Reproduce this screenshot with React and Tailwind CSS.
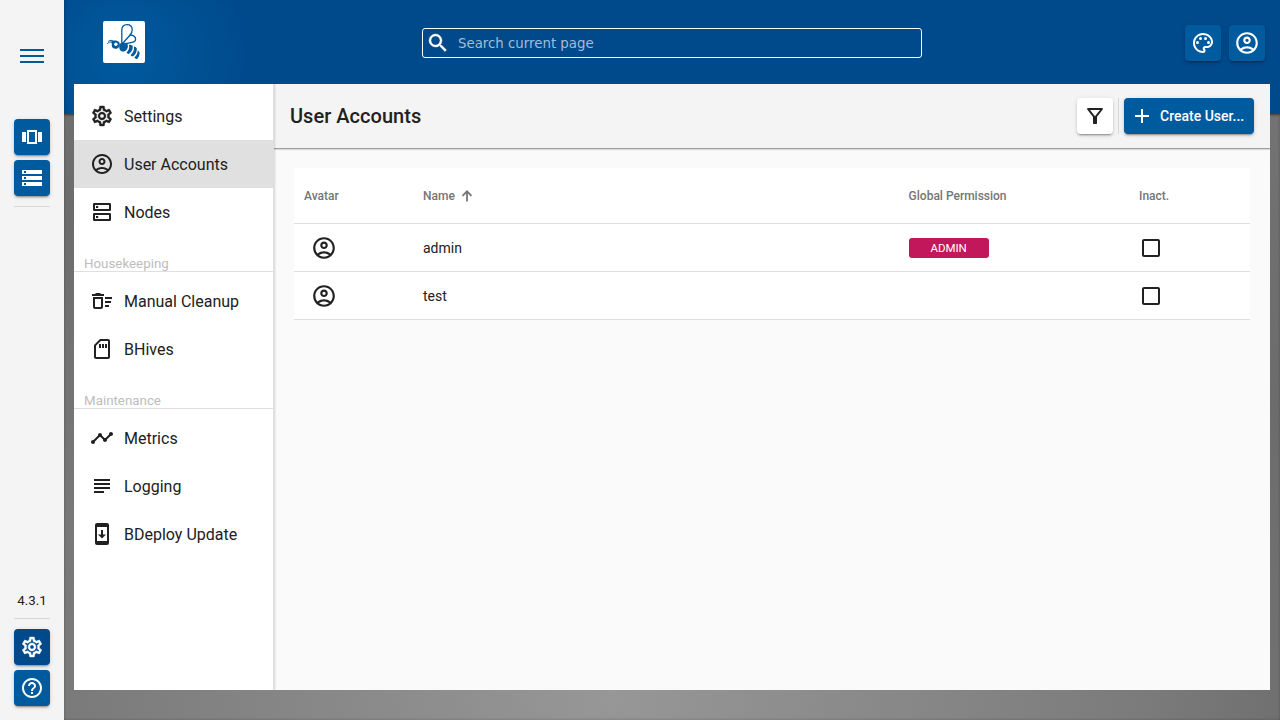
import React from "react";
import {
  MdOutlineSettings,
  MdOutlineAccountCircle,
  MdOutlineDeleteSweep,
  MdOutlineSdCard,
  MdTimeline,
  MdSubject,
  MdStorage,
  MdHelpOutline,
  MdOutlinePalette,
  MdSearch,
  MdOutlineFilterAlt,
  MdAdd,
} from "react-icons/md";

const raised =
  "shadow-[0_3px_1px_-2px_rgba(0,0,0,0.2),0_2px_2px_0_rgba(0,0,0,0.14),0_1px_5px_0_rgba(0,0,0,0.12)]";

const bolder = "[&>path:last-child]:[stroke-width:0.4]";

function NodesIcon() {
  return (
    <svg width="24" height="24" viewBox="0 0 24 24" fill="none" stroke="currentColor" strokeWidth="2">
      <rect x="4" y="4" width="16" height="6" rx="0.3" strokeLinejoin="round" />
      <rect x="4" y="14" width="16" height="6" rx="0.3" strokeLinejoin="round" />
      <path d="M6 7h2.200M6 17h2.200" />
    </svg>
  );
}

function CarouselIcon() {
  return (
    <svg width="24" height="24" viewBox="0 0 24 24" fill="currentColor">
      <path d="M2 7h4v10H2zM18 7h4v10h-4zM7 5v14h10V5zm8 12H9V7h6z" />
    </svg>
  );
}

function SortArrow() {
  return (
    <svg width="16" height="16" viewBox="0 0 16 16" fill="none" stroke="currentColor" strokeWidth="1.800">
      <path d="M8 13.500V3.400M3.500 7.800L8 3.300l4.500 4.500" />
    </svg>
  );
}

function UpdateIcon() {
  return (
    <svg width="24" height="24" viewBox="0 0 24 24" fill="currentColor">
      <path
        fillRule="evenodd"
        d="M7 1h10a2 2 0 0 1 2 2v18a2 2 0 0 1-2 2H7a2 2 0 0 1-2-2V3a2 2 0 0 1 2-2zm0 4v14h10V5z"
      />
      <path d="M12 16.500l-4-4h3V8h2v4.500h3z" />
    </svg>
  );
}

function BeeLogo() {
  return (
    <svg width="42" height="42" viewBox="0 0 42 42" className="rounded-[2px] bg-white">
      <g fill="none" stroke="#005a9e" strokeWidth="1.300" strokeLinecap="round" strokeLinejoin="round">
        <path d="M18.800 23V9c0-3.400 2-5.400 5.100-5.400 3.300 0 5.300 2.200 5.300 5.200 0 2.200-.6 3.600-2 5.200L20 22" />
        <path d="M27 14c3 .2 5.600 1.800 5.600 4.300 0 2-1.800 3-4.600 3.300L21 23" />
        <path d="M11 20.500C9 18.900 7 18.900 5.500 20.200M9.500 21.500C7.500 20.300 5.500 21 4.500 22.600" strokeWidth="1" />
      </g>
      <g fill="#005a9e">
        <path d="M8.300 20.500c2.700-1.400 6-1.100 8 .7 1 2.400.3 5.400-2.100 6.300-2.200.6-4.600.1-5.200-1.700-.4-1.300.1-3.700-.7-5.300z" />
        <path d="M16.800 22.700c2.200-1.600 6-1.300 7.700.3 1.200 3-.4 6.600-3.400 7.600-2.500.4-4.300-.8-4.700-3-.2-1.800-.3-3.600.4-4.900z" />
        <path d="M26 23.700c1.900-.1 3.300.5 3.800 1.400.3 3.300-1.500 6.500-4 7.900-1-.3-1.900-.9-2.200-1.600 2.200-2 3-4.700 2.400-7.700z" />
        <path d="M31 25.600c1.400.3 2.600 1.200 2.900 2.200-.1 3.300-1.600 6-4 7.700-1-.2-1.900-.8-2.300-1.500 2.600-2.200 3.800-5 3.400-8.400z" />
        <path d="M34.700 29.500c1.200.7 1.900 1.600 1.900 2.600-.1 2.500-1 4.500-2.500 6-1.200-.2-2.200-.7-2.800-1.600 2.300-1.800 3.400-4.100 3.400-7z" />
      </g>
      <circle cx="12.900" cy="23.300" r="1.700" fill="white" />
    </svg>
  );
}

function RailButton({ active, children }) {
  return (
    <button
      className={`flex h-9 w-9 shrink-0 items-center justify-center rounded text-white ${raised} ${
        active ? "bg-[#00498b]" : "bg-[#005a9e]"
      }`}
    >
      {children}
    </button>
  );
}

function Rail() {
  return (
    <aside className="z-10 flex w-16 shrink-0 flex-col items-center bg-[#f4f4f4] pb-3.5">
      <button className="mt-[49px] flex h-3.5 w-6 flex-col justify-between text-[#005a9e]">
        <span className="h-0.5 w-6 bg-current" />
        <span className="h-0.5 w-6 bg-current" />
        <span className="h-0.5 w-6 bg-current" />
      </button>
      <div className="mt-14 flex flex-col gap-[5px]">
        <RailButton><CarouselIcon /></RailButton>
        <RailButton><MdStorage size={24} /></RailButton>
      </div>
      <div className="mt-2.5 h-px w-9 bg-[#d6d6d6]" />
      <div className="flex-1" />
      <div className="text-[13.333px] leading-4">4.3.1</div>
      <div className="mt-[9px] mb-2.5 h-px w-9 bg-[#d6d6d6]" />
      <div className="flex flex-col gap-[5px]">
        <RailButton active><MdOutlineSettings size={24} className={bolder} /></RailButton>
        <RailButton><MdHelpOutline size={24} /></RailButton>
      </div>
    </aside>
  );
}

function MenuItem({ icon, label, active }) {
  return (
    <a className={`flex h-12 items-center gap-2.5 pl-4 text-base ${active ? "bg-[#e0e0e0]" : ""}`}>
      {icon}
      <span className="pt-0.5">{label}</span>
    </a>
  );
}

function MenuGroup({ label }) {
  return (
    <div className="flex h-[36px] items-end border-b border-[#e0e0e0] pl-2.5 text-[13.333px] leading-[15px] text-[#bdbdbd]">
      {label}
    </div>
  );
}

function SideMenu() {
  return (
    <nav className="z-10 w-[200px] shrink-0 border-r border-[#dedede] bg-white pt-2 shadow-[1px_0_2px_rgba(0,0,0,0.15)]">
      <MenuItem icon={<MdOutlineSettings size={24} className={bolder} />} label="Settings" />
      <MenuItem icon={<MdOutlineAccountCircle size={24} />} label="User Accounts" active />
      <MenuItem icon={<NodesIcon />} label="Nodes" />
      <MenuGroup label="Housekeeping" />
      <div className="pt-[5px]">
        <MenuItem icon={<MdOutlineDeleteSweep size={24} />} label="Manual Cleanup" />
        <MenuItem icon={<MdOutlineSdCard size={24} />} label="BHives" />
      </div>
      <MenuGroup label="Maintenance" />
      <div className="pt-[5px]">
        <MenuItem icon={<MdTimeline size={24} />} label="Metrics" />
        <MenuItem icon={<MdSubject size={24} />} label="Logging" />
        <MenuItem icon={<UpdateIcon />} label="BDeploy Update" />
      </div>
    </nav>
  );
}

const columns = "grid grid-cols-[119px_485.6px_230.4px_1fr] items-center border-b border-[#e0e0e0] pl-2.5";

function UserRow({ name, permission }) {
  return (
    <div className={`${columns} h-12 text-sm`}>
      <div className="pl-[7px]"><MdOutlineAccountCircle size={26} /></div>
      <div>{name}</div>
      <div>
        {permission && (
          <span className="flex h-5 w-20 items-center justify-center rounded-[3px] bg-[#c2185b] pt-px text-[11.500px] text-white">
            {permission}
          </span>
        )}
      </div>
      <div className="pl-[3px]">
        <div className="h-[18px] w-[18px] rounded-[2px] border-2 border-[#212121]" />
      </div>
    </div>
  );
}

export default function App() {
  return (
    <div className="flex h-[720px] w-[1280px] overflow-hidden font-['Roboto',sans-serif] text-[#212121]">
      <Rail />
      <div className="relative flex min-w-0 flex-1 flex-col bg-[radial-gradient(circle_at_45%_96%,#979797_0%,#7b7b7b_530px,#6c6c6c_720px,#787878_1000px)] shadow-[inset_0_0_3px_rgba(0,0,0,0.25)]">
        <div className="absolute inset-x-0 top-0 h-[114px] bg-[#00498b] bg-[radial-gradient(circle_at_60px_57px,#005a9e_0%,#00498b_130px)] shadow-[0_1px_2px_rgba(0,0,0,0.5),inset_4px_0_4px_-3px_rgba(0,0,0,0.2)]" />
        <header className="relative flex h-[84px] shrink-0 items-center pr-[15px] pl-[39px]">
          <BeeLogo />
          <div className="mt-[2px] ml-[277px] flex h-[30px] w-[500px] items-center rounded-[3px] border border-white pl-[3px] text-white">
            <MdSearch size={24} className={bolder} />
            <span className="ml-2 pt-0.5 font-['DejaVu_Sans',sans-serif] text-[13.333px] text-[#a3bdd5]">Search current page</span>
          </div>
          <div className="mt-[2px] ml-auto flex gap-2 text-white">
            <button className={`flex h-9 w-9 items-center justify-center rounded bg-[#005a9e] ${raised}`}>
              <MdOutlinePalette size={24} />
            </button>
            <button className={`flex h-9 w-9 items-center justify-center rounded bg-[#005a9e] ${raised}`}>
              <MdOutlineAccountCircle size={26} />
            </button>
          </div>
        </header>
        <div className="relative mr-2.5 mb-[30px] ml-2.5 flex min-h-0 flex-1 overflow-hidden bg-[#fafafa]">
          <SideMenu />
          <main className="flex min-w-0 flex-1 flex-col">
            <div className="flex h-[65px] shrink-0 items-center border-b border-[#9e9e9e] bg-[#f4f4f4] px-4 shadow-[0_1px_1px_rgba(0,0,0,0.12)]">
              <h1 className="flex-1 text-xl font-medium tracking-[0.03px]">User Accounts</h1>
              <button className={`flex h-9 w-9 items-center justify-center rounded bg-white ${raised}`}>
                <MdOutlineFilterAlt size={24} />
              </button>
              <div className="mx-[5px] h-9 w-px bg-[#d6d6d6]" />
              <button className={`flex h-9 w-[130px] items-center gap-1.5 rounded bg-[#005a9e] pl-1.5 text-sm font-medium text-white ${raised}`}>
                <MdAdd size={24} />
                Create User...
              </button>
            </div>
            <div className="mx-5 mt-[19px] bg-white">
              <div className={`${columns} h-14 text-xs font-medium text-[#757575]`}>
                <div>Avatar</div>
                <div className="flex items-center gap-1">
                  Name <SortArrow />
                </div>
                <div>Global Permission</div>
                <div>Inact.</div>
              </div>
              <UserRow name="admin" permission="ADMIN" />
              <UserRow name="test" />
            </div>
          </main>
        </div>
      </div>
    </div>
  );
}
